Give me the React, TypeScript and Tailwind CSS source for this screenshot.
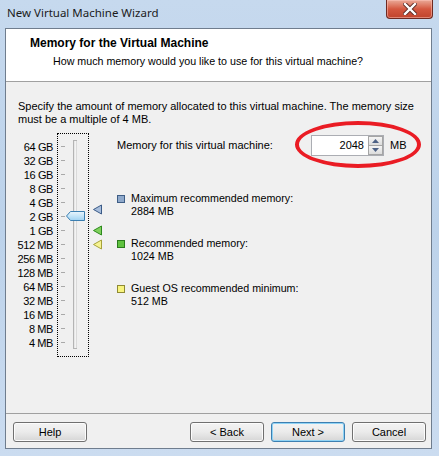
import React from "react";

const labels = ["64 GB","32 GB","16 GB","8 GB","4 GB","2 GB","1 GB","512 MB","256 MB","128 MB","64 MB","32 MB","16 MB","8 MB","4 MB"];

function Btn({ children, def }: { children: React.ReactNode; def?: boolean }) {
  return (
    <div
      className={
        "w-[74px] h-[20px] rounded-[3px] flex items-center justify-center text-[11px] text-black bg-gradient-to-b from-[#f3f3f3] via-[#ebebeb] to-[#d6d6d6] border " +
        (def ? "border-[#3c7fb1] shadow-[inset_0_0_0_1px_#8fd3f5]" : "border-[#707070] shadow-[inset_0_0_0_1px_#fcfcfc]")
      }
    >
      {children}
    </div>
  );
}

function Legend({ color, border, title, value }: { color: string; border: string; title: string; value: string }) {
  return (
    <div className="flex items-start leading-[13px]">
      <div className={"w-[8px] h-[8px] mt-[3px] border " + color + " " + border}></div>
      <div className="ml-[6px]">
        <div>{title}</div>
        <div>{value}</div>
      </div>
    </div>
  );
}

export default function App() {
  return (
    <div className="w-[439px] h-[456px] overflow-hidden bg-gradient-to-b from-[#c6d9ee] via-[#bcd2ea] to-[#cbdcf0] font-['Liberation_Sans',sans-serif] text-[11px] text-black flex flex-col">
      {/* title bar */}
      <div className="h-[28px] flex justify-between">
        <div className="pl-[7px] pt-[5px] text-[11.5px] leading-[16px] text-[#1b1b1b] font-['Noto_Sans',sans-serif]">New Virtual Machine Wizard</div>
        <div className="w-[47px] h-[19px] mr-[6px] rounded-b-[4px] border border-t-0 border-[#6e2a22] bg-gradient-to-b from-[#e9a998] via-[#d4573f] to-[#c0432c] shadow-[inset_0_0_0_1px_rgba(255,200,190,0.5)] flex items-center justify-center">
          <svg width="14" height="12" viewBox="0 0 14 12">
            <path d="M2 1 L12 11 M12 1 L2 11" stroke="#5a2a24" strokeWidth="4.2" strokeLinecap="square" />
            <path d="M2 1 L12 11 M12 1 L2 11" stroke="#ffffff" strokeWidth="2.4" strokeLinecap="square" />
          </svg>
        </div>
      </div>
      {/* client area */}
      <div className="ml-[5px] w-[427px] h-[421px] border border-[#6f7d8e] bg-[#f0f0f0] flex flex-col">
        {/* header */}
        <div className="h-[53px] bg-white border-b border-[#a0a0a0] pl-[24px] pt-[7px] leading-[14px]">
          <div className="font-bold text-[12px]">Memory for the Virtual Machine</div>
          <div className="ml-[23px] mt-[4px] text-[10.7px]">How much memory would you like to use for this virtual machine?</div>
        </div>
        {/* body */}
        <div className="flex-1 pl-[12px] pt-[18px]">
          <div className="leading-[13px]">
            Specify the amount of memory allocated to this virtual machine. The memory size
            <br />
            must be a multiple of 4 MB.
          </div>
          <div className="flex items-start mt-[7px]">
            <div className="w-[40px] -ml-[5px] pt-[7px] text-right leading-[14px] whitespace-nowrap tracking-[-0.4px]">
              {labels.map((l) => (
                <div key={l}>{l}</div>
              ))}
            </div>
            <div className="ml-[4px] w-[32px] h-[224px] border border-dotted border-black">
              <svg width="30" height="222" viewBox="0 0 30 222">
                <defs>
                  <linearGradient id="thumb" x1="0" y1="0" x2="0" y2="1">
                    <stop offset="0" stopColor="#eaf6fd" />
                    <stop offset="0.5" stopColor="#c4e5f8" />
                    <stop offset="1" stopColor="#9fd2f2" />
                  </linearGradient>
                </defs>
                {labels.map((l, i) => (
                  <line key={l} x1="3" x2="7" y1={12.5 + 14 * i} y2={12.5 + 14 * i} stroke="#a9a9a9" strokeWidth="1" />
                ))}
                <rect x="15.5" y="6.5" width="3" height="208" fill="#e8e8e8" stroke="#b4b4b4" />
                <line x1="18" y1="7" x2="18" y2="214" stroke="#ffffff" />
                <path d="M8.5 82 L12.5 77.5 L26.5 77.5 L26.5 86.5 L12.5 86.5 Z" fill="url(#thumb)" stroke="#3c7fb1" />
              </svg>
            </div>
            <div className="ml-[4px] w-[12px] h-[224px]">
              <svg width="12" height="224" viewBox="0 0 12 224">
                <path d="M0.5 76.5 L8.5 72 L8.5 81 Z" fill="#a7bddb" stroke="#3b5b87" />
                <path d="M0.5 97.5 L8.5 93 L8.5 102 Z" fill="#7fd05c" stroke="#2c8a1c" />
                <path d="M0.5 111.5 L8.5 107 L8.5 116 Z" fill="#f6f392" stroke="#a6a23a" />
              </svg>
            </div>
            <div className="ml-[12px] relative flex-1">
              <div className="mt-[2px] h-[21px] flex items-center">
                <div className="w-[194px]">Memory for this virtual machine:</div>
                <div className="w-[73px] h-[21px] flex border border-[#abadb3] bg-white">
                  <div className="flex-1 text-right pr-[4px] leading-[19px]">2048</div>
                  <div className="w-[15px] flex flex-col">
                    <div className="h-[9.5px] border border-[#a5a5a5] bg-gradient-to-b from-[#f5f5f5] to-[#dcdcdc] flex items-center justify-center">
                      <svg width="7" height="4" viewBox="0 0 7 4"><path d="M0 4 L3.5 0 L7 4 Z" fill="#4d6185" /></svg>
                    </div>
                    <div className="h-[9.5px] border border-t-0 border-[#a5a5a5] bg-gradient-to-b from-[#f5f5f5] to-[#dcdcdc] flex items-center justify-center">
                      <svg width="7" height="4" viewBox="0 0 7 4"><path d="M0 0 L3.5 4 L7 0 Z" fill="#4d6185" /></svg>
                    </div>
                  </div>
                </div>
                <div className="ml-[6px]">MB</div>
              </div>
              <div className="absolute left-[178px] top-[-12px] w-[126px] h-[47px] rounded-[50%] border-[4px] border-[#ea1c24]"></div>
              <div className="mt-[36px] flex flex-col gap-[19px] text-[10.7px]">
                <Legend color="bg-[#8fa9cb]" border="border-[#3e5d85]" title="Maximum recommended memory:" value="2884 MB" />
                <Legend color="bg-[#5fc23f]" border="border-[#2a7a1c]" title="Recommended memory:" value="1024 MB" />
                <Legend color="bg-[#f8f47e]" border="border-[#8f8a34]" title="Guest OS recommended minimum:" value="512 MB" />
              </div>
            </div>
          </div>
        </div>
        {/* footer */}
        <div className="h-[35px] border-t border-[#a0a0a0] pt-[8px] pl-[7px] pr-[5px] flex">
          <Btn>Help</Btn>
          <div className="flex-1"></div>
          <div className="flex gap-[7px]">
            <Btn>&lt; Back</Btn>
            <Btn def>Next &gt;</Btn>
            <Btn>Cancel</Btn>
          </div>
        </div>
      </div>
    </div>
  );
}
